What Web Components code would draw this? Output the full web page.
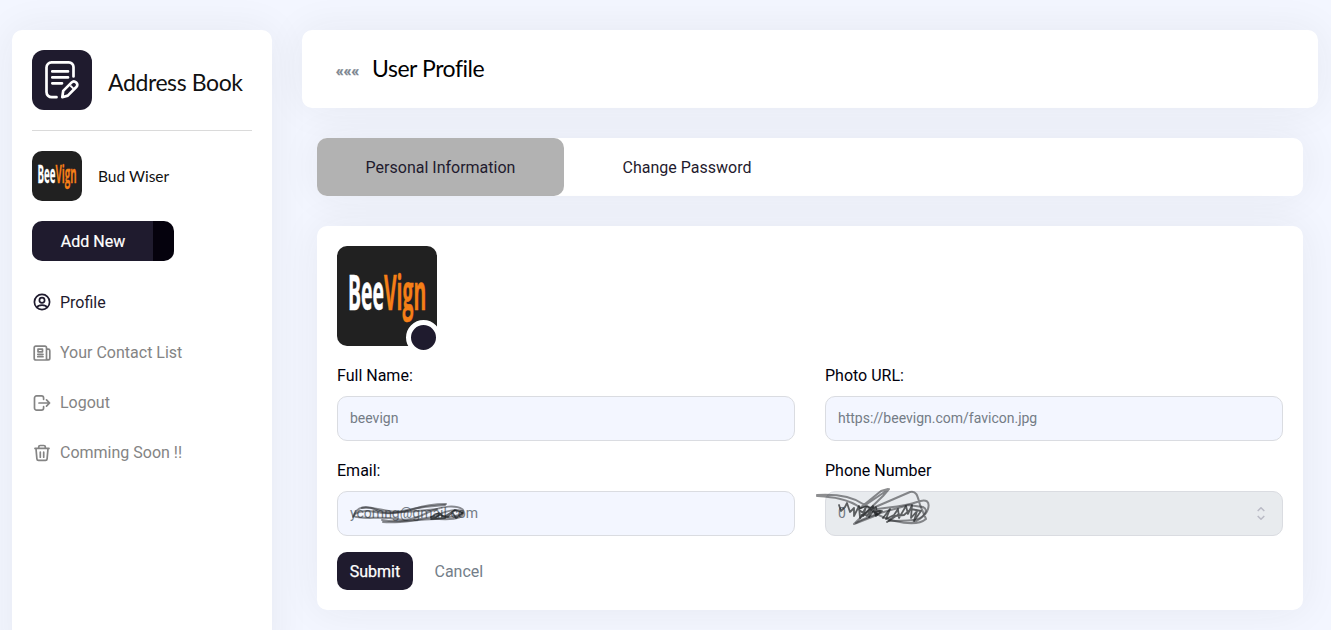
<!DOCTYPE html>
<html lang="en"><head><meta charset="utf-8"><title>Address Book</title>
<style>
html,body{margin:0;height:630px;overflow:hidden;background:#f3f6ff;font-family:Roboto,sans-serif;font-size:16px;line-height:24px;color:#000}
</style></head><body><address-book-app></address-book-app>
<script>
const define=(name,html)=>customElements.define(name,class extends HTMLElement{
  constructor(){super();const t=document.createElement('template');t.innerHTML=html;this.attachShadow({mode:'open'}).append(t.content.cloneNode(true));}
});

define('app-card',`<style>:host{display:block;box-sizing:border-box;background:#fff;border-radius:10px;box-shadow:0 0 40px rgba(51,51,51,.065)}</style><slot></slot>`);

define('brand-picture',`<style>
:host{display:block;width:50px;height:50px;border-radius:10px;background:#212121}
svg{display:block;width:100%;height:100%}
</style><svg viewBox="0 0 100 100"><text transform="translate(11 64) scale(.571 1.8)" font-family="Open Sans, sans-serif" font-weight="700" font-size="27" textLength="137" lengthAdjust="spacingAndGlyphs" fill="#fff" stroke="#fff" stroke-width=".3">Bee<tspan fill="#f57f17" stroke="#f57f17">Vign</tspan></text></svg>`);

define('nav-item',`<style>
:host{display:flex;align-items:center;height:24px;gap:8px;color:#848484}
:host([active]){color:#1f1b2e}
span{padding-top:2px}
::slotted(svg){width:20px;height:20px;fill:none;stroke:currentColor;stroke-width:1.7;stroke-linecap:round;stroke-linejoin:round;margin-top:1px}
:host([active]) ::slotted(svg){margin-top:-1px}
</style><slot name="icon"></slot><span><slot></slot></span>`);

define('side-bar',`<style>
:host{display:block;width:260px;flex:none}
app-card{height:640px;padding:20px}
.brand{display:flex;gap:16px;align-items:center;padding-bottom:20px;border-bottom:1px solid #dadada}
.logo{width:60px;height:60px;border-radius:12px;background:#1f1b2e}
.logo svg{display:block}
h1{margin:4px 0 0;font:400 23px/29px Lato,sans-serif;letter-spacing:-.4px;white-space:nowrap;color:#111}
.user{display:flex;gap:16px;align-items:center;margin-top:20px;font:15.5px/20px Lato,sans-serif;color:#111}
.add{display:flex;margin-top:20px;width:142px;height:40px;border-radius:10px;border:0;padding:0;background:linear-gradient(90deg,#1f1b2e 121px,#05020d 121px);color:#fff;font:16px/42px Roboto,sans-serif}
.add span{width:122px;text-align:center;-webkit-text-stroke:.2px #fff}
nav{display:grid;gap:26px;margin-top:29px}
</style><app-card>
<div class="brand"><div class="logo"><svg width="60" height="60" fill="none" stroke="#fff" stroke-width="2.7" stroke-linecap="round" stroke-linejoin="round"><path d="M24.500 47.200h-4.800a5.200 5.200 0 0 1-5.200-5.200V17.400a5 5 0 0 1 5-5h17.300a4.700 4.700 0 0 1 4.700 4.700v9.400M20.300 21.400h15.700M20.300 27.400h15.700M20.300 33.300h9.700"/><path d="m30.300 47.200.9-6.300 8.500-8.500c1.400-1.400 3-1.300 4.500.1s1.500 3 .1 4.500l-8.500 8.600z"/><path stroke-width="2" d="m38.900 36.100 2.300 2.300"/></svg></div><h1>Address Book</h1></div>
<div class="user"><brand-picture></brand-picture><span class="name">Bud Wiser</span></div>
<button class="add"><span>Add New</span></button>
<nav>
<nav-item active><svg slot="icon" viewBox="0 0 20 20"><circle cx="10" cy="10" r="7.600"/><circle cx="10" cy="8.200" r="2.600"/><path d="M4.900 15.300c1.500-2.900 8.700-2.900 10.200 0"/></svg>Profile</nav-item>
<nav-item><svg slot="icon" viewBox="0 0 20 20"><path d="M14.500 17H4a1.800 1.800 0 0 1-1.800-1.800V4.700A1.500 1.500 0 0 1 3.700 3.200h9.300a1.500 1.500 0 0 1 1.500 1.500V17zM14.500 6.200h1.800a1.500 1.500 0 0 1 1.500 1.500v7.500a1.600 1.600 0 0 1-3.300 0M5.800 13.700h5.200M5.800 11.300h5.200M6 6.200h4.500v2.600H6z"/></svg>Your Contact List</nav-item>
<nav-item><svg slot="icon" viewBox="0 0 20 20"><path d="M11.600 6.300V5A2.100 2.100 0 0 0 9.500 2.900H4.600A2.100 2.100 0 0 0 2.500 5v10a2.100 2.100 0 0 0 2.100 2.100h4.900a2.100 2.100 0 0 0 2.100-2.100v-1.300M7 10h10.500M14.500 6.800l3.100 3.200-3.100 3.200"/></svg>Logout</nav-item>
<nav-item><svg slot="icon" viewBox="0 0 20 20"><path d="M3 5.400h14M6.700 5.200V4A1.500 1.500 0 0 1 8.200 2.500h3.600A1.500 1.500 0 0 1 13.300 4v1.200M4 5.600l.9 10.300a1.600 1.600 0 0 0 1.600 1.500h7a1.600 1.600 0 0 0 1.600-1.500L16 5.600M8.300 9.200v5M11.700 9.200v5"/></svg>Comming Soon !!</nav-item>
</nav></app-card>`);

define('page-header',`<style>
:host{display:block}
app-card{display:flex;align-items:center;height:78px;padding:0 33px;gap:12px}
b{color:#7b858f;font:900 15px/24px Roboto,sans-serif;padding:3px 0 0 1px;-webkit-text-stroke:.3px #7b858f;width:24px;white-space:nowrap}
h2{margin:-1px 0 0;font:400 23px/29px Lato,sans-serif;letter-spacing:-.45px;color:#000}
</style><app-card><b>«««</b><h2><slot></slot></h2></app-card>`);

define('tab-bar',`<style>
app-card{display:flex;height:58px}
a{display:flex;align-items:center;justify-content:center;box-sizing:border-box;padding-top:2px;width:247px;color:#1f1b2e}
a+a{width:246px}
a.on{background:#b2b2b2;border-radius:10px}
</style><app-card><a class="on">Personal Information</a><a>Change Password</a></app-card>`);

define('form-field',`<style>
:host{display:block}
label{display:block;height:24px;line-height:26px;margin-bottom:9px;color:#00000c}
.box{position:relative;display:flex;align-items:center;justify-content:space-between;box-sizing:border-box;height:45px;padding:0 12px;border:1px solid #dadce1;border-radius:10px;background:#f3f6ff;font-size:14px;color:#747c86}
.box>span{padding-bottom:2px}
:host([disabled]) .box{background:#e8ebee}
::slotted(svg){position:absolute;overflow:visible;pointer-events:none}
.spin{display:none;width:8px;height:13px;margin-right:5px}
:host([disabled]) .spin{display:block}
</style><label><slot name="label"></slot></label><div class="box"><span><slot></slot></span><svg class="spin" viewBox="0 0 8 13" fill="none" stroke="#b9bac5" stroke-width="1.500"><path d="m.7 4 3.300-3.200L7.300 4M.7 9l3.300 3.200L7.300 9"/></svg><slot name="over"></slot></div>`);

define('profile-form',`<style>
app-card{padding:20px;height:384px}
.photo{position:relative;width:100px;height:100px}
.photo brand-picture{width:100px;height:100px}
.photo i{position:absolute;left:69px;top:74px;width:25px;height:25px;border:5px solid #fff;border-radius:50%;background:#1f1b2e}
.grid{display:grid;grid-template-columns:1fr 1fr;gap:17px 30px;margin-top:17px}
.grid svg{fill:none;stroke:#303234;stroke-opacity:.55;stroke-width:2;stroke-linecap:round;stroke-linejoin:round}
.grid svg .dark{stroke:#101214;stroke-opacity:.65;stroke-width:1.800}
.actions{display:flex;gap:21.500px;margin-top:16px;height:38px;line-height:40px;color:#747e89}
button{border:0;padding:0;width:76px;height:38px;border-radius:10px;background:#1f1b2e;color:#fff;font:400 16px Roboto,sans-serif;-webkit-text-stroke:.25px #fff}
</style><app-card><div class="photo"><brand-picture></brand-picture><i></i></div>
<div class="grid">
<form-field><span slot="label">Full Name:</span>beevign</form-field>
<form-field><span slot="label">Photo URL:</span>https://beevign.com/favicon.jpg</form-field>
<form-field><span slot="label">Email:</span>ycomng@gmail.com
<svg slot="over" style="left:0;top:0" width="150" height="44"><path d="M15 25C19 14 28 13 39 18S64 21 76 17S96 12 108 12"/><path d="M16 24C21 28 44 24 58 27S82 24 93 19S118 13 124 17S114 27 104 24"/><path d="M17 22C28 15 42 23 54 21S73 17 86 15L107 13"/><path d="M45 30C65 32 80 26 101 27S127 24 124 20S105 19 99 24"/><path d="M24 16C37 14 45 20 60 20S82 19 99 17"/><path d="M44 28C60 31 78 28 95 25"/><path class="dark" d="M93 25l8-4 5 4 8-5 4 6 7-5-8-3-8 7-7-2-9 4 14-1 7-6"/></svg></form-field>
<form-field disabled><span slot="label">Phone Number</span><span>0</span>
<svg slot="over" style="left:-10px;top:-4px" width="120" height="44"><path d="M1 8C15 9 31 10 45 20L73 1L67 8L38 36L61 27M1 7C18 6 34 7 47 16S58 25 64 23M44 20L65 3L72 1"/><path d="M57 20L94 4C101 2 102 10 104 17L110 31C103 37 91 36 79 33S64 28 57 24M61 21C76 19 91 18 101 14S114 14 112 21S99 36 91 35"/><path d="M40 35C57 25 78 22 92 17L107 19C114 22 107 31 97 32S80 33 73 33"/><path class="dark" d="M23 17l2 6 4-4 2-4 3 9 4-4 0 8 5-10 1 12 6-11-3 9 9-9-3 10 7-10 1 8 5-4-6 0-9-5-9 3 9 7 6-10 3 10"/><path class="dark" d="M67 30l7-9-4 10 8-4 4-6 1 9 7-12 2 8 4-9-1 13 6-7-3 10 7-10-10-2-7 6-9 1-8 6 12-8"/></svg></form-field>
</div><div class="actions"><button>Submit</button><span>Cancel</span></div></app-card>`);

define('address-book-app',`<style>
:host{display:flex;gap:30px;padding:30px 13px 0 12px;height:600px;overflow:hidden}
main{flex:1;min-width:0}
.content{display:grid;gap:30px;margin:30px 15px 0}
</style><side-bar></side-bar><main><page-header>User Profile</page-header><div class="content"><tab-bar></tab-bar><profile-form></profile-form></div></main>`);
</script></body></html>
